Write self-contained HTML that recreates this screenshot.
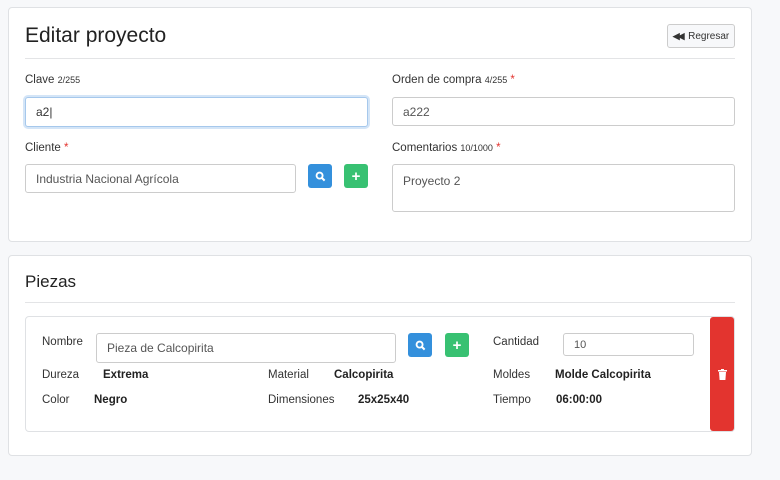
<!DOCTYPE html>
<html><head><meta charset="utf-8"><style>
*{box-sizing:border-box;margin:0;padding:0}
body{width:780px;height:480px;background:#f7f8fa;font-family:"Liberation Sans",sans-serif;color:#212529;position:relative;overflow:hidden;font-size:12px}
.a{position:absolute}
.card{position:absolute;background:#fff;border:1px solid #dfe1e4;border-radius:4px}
.hr{position:absolute;height:1px;background:#e3e4e6}
.in{position:absolute;border:1px solid #ccc;border-radius:3px;background:#fff;color:#555;font-size:12px;padding-left:10px;display:flex;align-items:center}
.lab{position:absolute;font-size:11.5px;color:#333}
.sm{font-size:9px}
.req{color:#e3342f}
.btn{position:absolute;width:24px;height:24px;border-radius:3px;color:#fff;display:flex;align-items:center;justify-content:center}
.b{position:absolute;font-weight:bold;font-size:11.5px;color:#222}
</style></head><body>
<div class="card" style="left:8px;top:7px;width:744px;height:235px"></div>
<div class="a" style="left:25px;top:24px;font-size:21px;color:#222">Editar proyecto</div>
<div class="a" style="left:667px;top:24px;width:68px;height:24px;border:1px solid #ccc;border-radius:3px;background:#f7f8fa;font-size:10px;display:flex;align-items:center;justify-content:center;color:#333"><b style="font-size:9px;letter-spacing:-2px">◀◀</b>&nbsp;&nbsp;Regresar</div>
<div class="hr" style="left:25px;top:58px;width:710px"></div>
<div class="lab" style="left:25px;top:74px">Clave <span class="sm">2/255</span></div>
<div class="in" style="left:25px;top:97px;width:343px;height:30px;border-color:#a6c8ec;box-shadow:0 0 0 2px #d4e5f7;color:#333">a2|</div>
<div class="lab" style="left:392px;top:74px">Orden de compra <span class="sm">4/255</span> <span class="req">*</span></div>
<div class="in" style="left:392px;top:97px;width:343px;height:29px">a222</div>
<div class="lab" style="left:25px;top:142px">Cliente <span class="req">*</span></div>
<div class="in" style="left:25px;top:164px;width:271px;height:29px">Industria Nacional Agrícola</div>
<div class="btn" style="left:308px;top:164px;background:#3490dc"><svg width="11" height="11" viewBox="0 0 12 12"><circle cx="5" cy="5" r="3.3" fill="none" stroke="#fff" stroke-width="2"/><path d="M7.5 7.5L10.5 10.5" stroke="#fff" stroke-width="2.2"/></svg></div>
<div class="btn" style="left:344px;top:164px;background:#38c172;font-weight:bold;font-size:15px">+</div>
<div class="lab" style="left:392px;top:142px">Comentarios <span class="sm">10/1000</span> <span class="req">*</span></div>
<div class="in" style="left:392px;top:164px;width:343px;height:48px;align-items:flex-start;padding-top:9px">Proyecto 2</div>

<div class="card" style="left:8px;top:255px;width:744px;height:201px"></div>
<div class="a" style="left:25px;top:272px;font-size:17px;color:#222">Piezas</div>
<div class="hr" style="left:25px;top:302px;width:710px"></div>
<div class="a" style="left:25px;top:316px;width:710px;height:116px;border:1px solid #dfe1e4;border-radius:4px"></div>
<div class="a" style="left:710px;top:317px;width:24px;height:114px;background:#e3342f;border-radius:3px;display:flex;align-items:center;justify-content:center"><svg width="9" height="11" viewBox="0 0 9 11"><rect x="0" y="1" width="9" height="1.5" fill="#fff"/><rect x="3" y="0" width="3" height="1.5" fill="#fff"/><path d="M1 3H8L7.4 11H1.6Z" fill="#fff"/></svg></div>
<div class="lab" style="left:42px;top:336px">Nombre</div>
<div class="in" style="left:96px;top:333px;width:300px;height:30px">Pieza de Calcopirita</div>
<div class="btn" style="left:408px;top:333px;background:#3490dc"><svg width="11" height="11" viewBox="0 0 12 12"><circle cx="5" cy="5" r="3.3" fill="none" stroke="#fff" stroke-width="2"/><path d="M7.5 7.5L10.5 10.5" stroke="#fff" stroke-width="2.2"/></svg></div>
<div class="btn" style="left:445px;top:333px;background:#38c172;font-weight:bold;font-size:15px">+</div>
<div class="lab" style="left:493px;top:336px">Cantidad</div>
<div class="in" style="left:563px;top:333px;width:131px;height:23px;font-size:11px">10</div>
<div class="lab" style="left:42px;top:369px">Dureza</div><div class="b" style="left:103px;top:369px">Extrema</div>
<div class="lab" style="left:268px;top:369px">Material</div><div class="b" style="left:334px;top:369px">Calcopirita</div>
<div class="lab" style="left:493px;top:369px">Moldes</div><div class="b" style="left:555px;top:369px">Molde Calcopirita</div>
<div class="lab" style="left:42px;top:394px">Color</div><div class="b" style="left:94px;top:394px">Negro</div>
<div class="lab" style="left:268px;top:394px">Dimensiones</div><div class="b" style="left:358px;top:394px">25x25x40</div>
<div class="lab" style="left:493px;top:394px">Tiempo</div><div class="b" style="left:556px;top:394px">06:00:00</div>
</body></html>
